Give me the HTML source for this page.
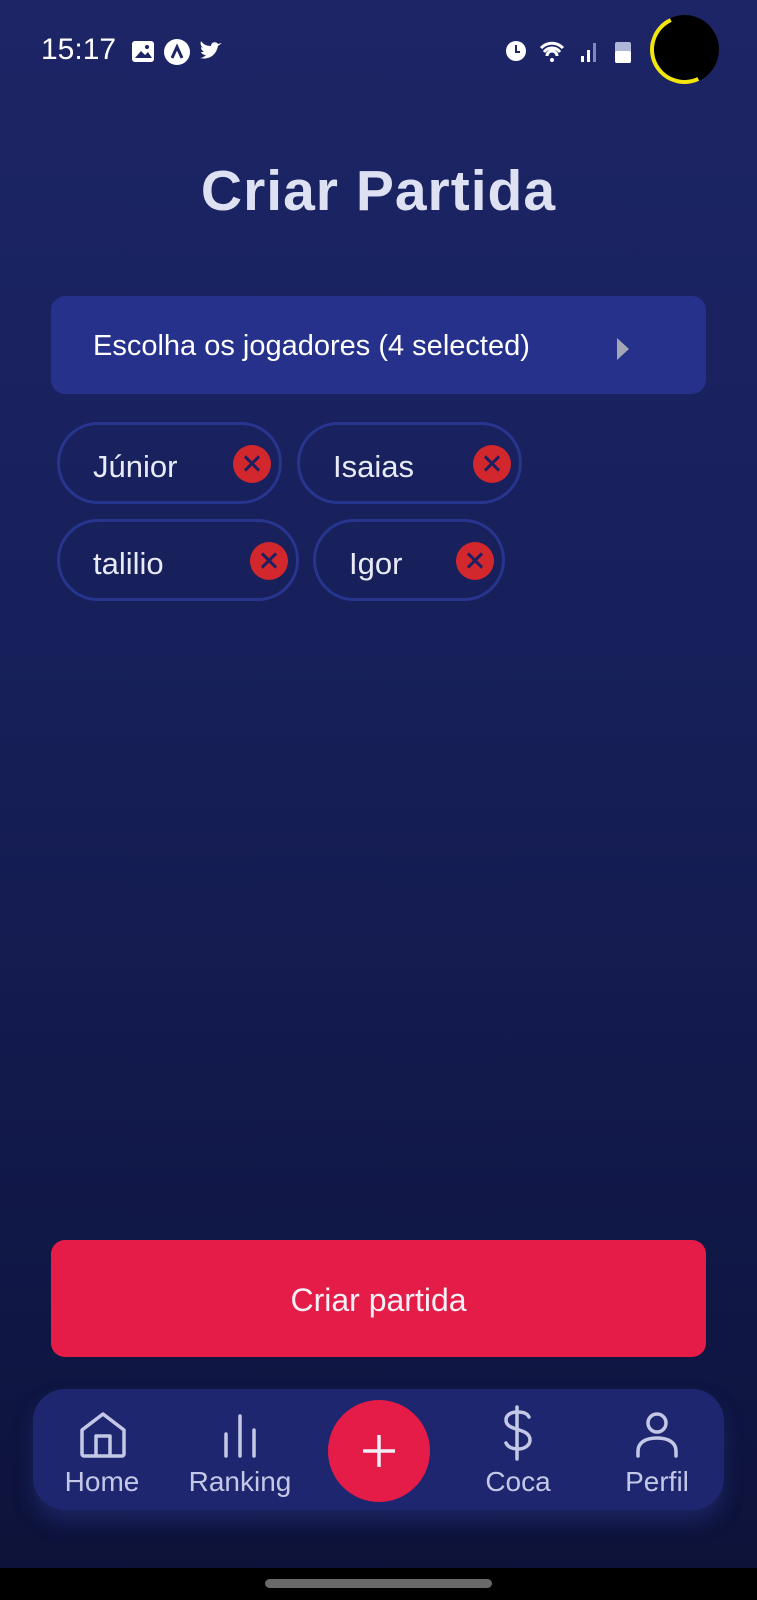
<!DOCTYPE html>
<html><head><meta charset="utf-8"><style>
*{margin:0;padding:0;box-sizing:border-box}
body{width:757px;height:1600px;overflow:hidden;font-family:"Liberation Sans",sans-serif;background:linear-gradient(#1d2566 0%,#17205a 40%,#0f1643 85%,#0d1238 100%);position:relative;color:#e6e8f5}
.abs{position:absolute}
.chip{position:absolute;height:82px;border:3px solid #28358f;border-radius:41px;}
.chip span{position:absolute;left:33px;top:22px;font-size:31px;color:#e8eaf6}
.x{position:absolute;top:20px;width:38px;height:38px;border-radius:50%;background:#d3272e}
.nav{left:33px;top:1389px;width:691px;height:121px;background:#1e2670;border-radius:32px;box-shadow:0 12px 18px rgba(40,50,130,.5)}
.lbl{position:absolute;top:1466px;font-size:28px;color:#c3c8e6;transform:translateX(-50%)}
.x::before,.x::after{content:"";position:absolute;left:9px;top:17px;width:20px;height:3px;background:#1d2060;transform:rotate(45deg)}.x::after{transform:rotate(-45deg)}
</style></head><body>
<div class="abs" style="left:41px;top:33px;font-size:30px;color:#fff">15:17</div>
<svg class="abs" style="left:130px;top:38px" width="100" height="28" viewBox="0 0 100 28">
<rect x="2" y="3" width="22" height="21" rx="3" fill="#fff"/><path d="M5 20l6-7 4 4 3-3 4 6z" fill="#1d2566"/><circle cx="17" cy="9" r="2" fill="#1d2566"/>
<circle cx="47" cy="14" r="13" fill="#fff"/><path d="M42 20l5-11 5 11" stroke="#1d2566" stroke-width="3" fill="none"/>
<path d="M70 20c8 2 16-2 18-12l4-3-4 1c-2-3-7-2-7 2-5 0-8-2-10-5-1 3 0 5 2 7l-2-1c0 3 2 4 3 5h-3c1 2 3 3 5 3-2 2-4 3-6 3z" fill="#fff"/></svg>
<svg class="abs" style="left:503px;top:36px" width="130" height="30" viewBox="0 0 130 30">
<circle cx="13" cy="15" r="10" fill="#fff"/><path d="M13 9v7h4" stroke="#1d2566" stroke-width="2" fill="none"/>
<path d="M38 12a15 15 0 0 1 22 0M41 16a10 10 0 0 1 16 0M44 20a5 5 0 0 1 10 0" stroke="#fff" stroke-width="3" fill="none"/><circle cx="49" cy="24" r="2" fill="#fff"/>
<rect x="78" y="20" width="3" height="6" fill="#fff"/><rect x="84" y="14" width="3" height="12" fill="#fff"/><rect x="90" y="7" width="3" height="19" fill="#8088b8"/>
<rect x="112" y="6" width="16" height="21" rx="2" fill="#b0b6d8"/><rect x="112" y="15" width="16" height="12" rx="2" fill="#fff"/></svg>
<div class="abs" style="left:650px;top:15px;width:69px;height:69px;border-radius:50%;background:#000;border:4px solid transparent;border-left-color:#f2e60b;border-bottom-color:#f2e60b;transform:rotate(20deg)"></div>
<div class="abs" style="left:0;width:757px;top:158px;text-align:center;font-size:57px;font-weight:bold;color:#dde1f2;letter-spacing:1px">Criar Partida</div>
<div class="abs" style="left:51px;top:296px;width:655px;height:98px;background:#25318a;border-radius:14px"></div>
<div class="abs" style="left:93px;top:330px;font-size:29px;color:#fff">Escolha os jogadores (4 selected)</div>
<svg class="abs" style="left:615px;top:336px" width="16" height="26"><path d="M2 2l12 11-12 11z" fill="#a3a6b5"/></svg>
<div class="chip" style="left:57px;top:422px;width:225px"><span style="top:24px">Júnior</span><div class="x" style="left:173px"></div></div>
<div class="chip" style="left:297px;top:422px;width:225px"><span style="top:24px">Isaias</span><div class="x" style="left:173px"></div></div>
<div class="chip" style="left:57px;top:519px;width:242px"><span style="top:24px">talilio</span><div class="x" style="left:190px"></div></div>
<div class="chip" style="left:313px;top:519px;width:192px"><span style="top:24px">Igor</span><div class="x" style="left:140px"></div></div>
<div class="abs" style="left:51px;top:1240px;width:655px;height:117px;background:#e51c47;border-radius:14px;text-align:center;line-height:121px;font-size:32px;color:#f4f0f5">Criar partida</div>
<div class="abs nav"></div>
<svg class="abs" style="left:78px;top:1410px" width="50" height="50" viewBox="0 0 50 50"><path d="M4 20L25 4l21 16v24a2 2 0 0 1-2 2H6a2 2 0 0 1-2-2z M18 46V26h14v20" fill="none" stroke="#c3c8e6" stroke-width="3.5" stroke-linejoin="round"/></svg>
<svg class="abs" style="left:220px;top:1412px" width="40" height="48"><path d="M6 22v22M20 4v40M34 18v26" stroke="#c3c8e6" stroke-width="3.5" stroke-linecap="round"/></svg>
<div class="abs" style="left:328px;top:1400px;width:102px;height:102px;border-radius:50%;background:#e51c47"></div>
<svg class="abs" style="left:361px;top:1433px" width="36" height="36"><path d="M18 2v32M2 18h32" stroke="#f2eef6" stroke-width="3.5"/></svg>
<svg class="abs" style="left:499px;top:1405px" width="36" height="58" viewBox="0 0 36 58"><path d="M18 2v52M30 12c-2-4-6-5-12-5-6 0-11 3-11 8 0 12 24 7 24 20 0 5-5 9-12 9-6 0-10-2-12-6" fill="none" stroke="#c3c8e6" stroke-width="3.5" stroke-linecap="round"/></svg>
<svg class="abs" style="left:634px;top:1410px" width="46" height="50"><circle cx="23" cy="13" r="9" fill="none" stroke="#c3c8e6" stroke-width="3.5"/><path d="M4 46v-5c0-8 7-13 19-13s19 5 19 13v5" fill="none" stroke="#c3c8e6" stroke-width="3.5" stroke-linecap="round"/></svg>
<div class="lbl" style="left:102px">Home</div>
<div class="lbl" style="left:240px">Ranking</div>
<div class="lbl" style="left:518px">Coca</div>
<div class="lbl" style="left:657px">Perfil</div>
<div class="abs" style="left:0;top:1568px;width:757px;height:32px;background:#000"></div>
<div class="abs" style="left:265px;top:1579px;width:227px;height:9px;border-radius:5px;background:#6a6a6a"></div>
</body></html>
